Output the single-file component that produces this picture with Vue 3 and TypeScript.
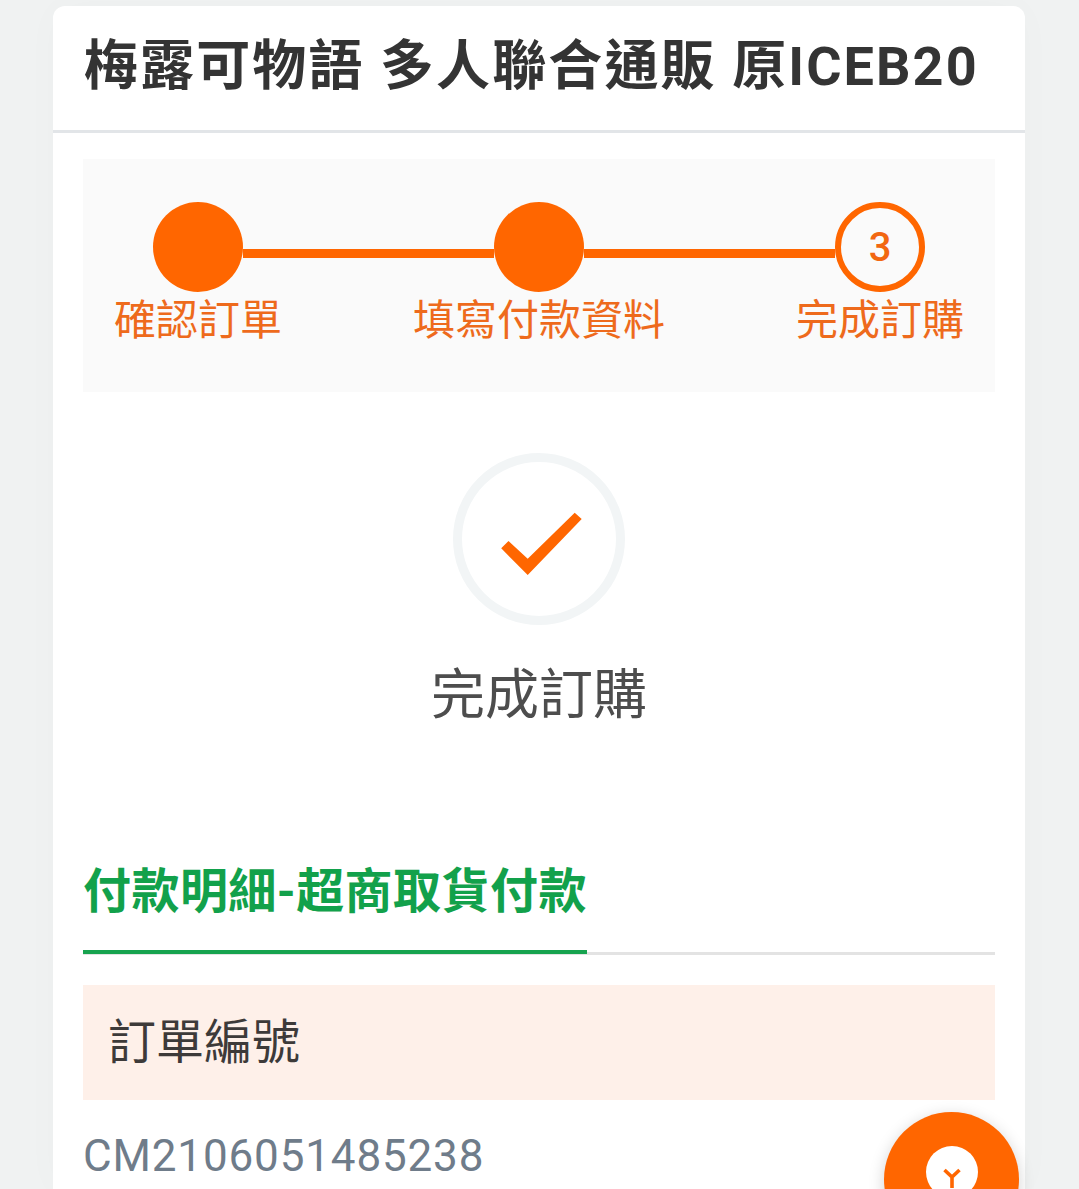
<script setup lang="ts">
const steps = [
  { label: "確認訂單", done: true },
  { label: "填寫付款資料", done: true },
  { label: "完成訂購", done: false },
];
</script>

<template>
  <div class="page">
    <section class="card">
      <header class="card-header">
        <h1>梅露可物語 多人聯合通販 原ICEB20</h1>
      </header>

      <div class="card-body">
        <div class="steps">
          <div class="steps-track">
            <template v-for="(step, i) in steps" :key="step.label">
              <div v-if="i > 0" class="steps-line"></div>
              <div class="steps-dot" :class="{ current: !step.done }">
                <span v-if="!step.done">{{ i + 1 }}</span>
              </div>
            </template>
          </div>
          <div class="steps-labels">
            <div v-for="step in steps" :key="step.label" class="steps-label">
              <span>{{ step.label }}</span>
            </div>
          </div>
        </div>

        <div class="result">
          <div class="result-ring">
            <svg width="172" height="172" viewBox="0 0 172 172">
              <polygon
                points="55.5,88 48.2,95.3 74.7,122 128.7,66 121.7,59.7 74.7,105.7"
                fill="#ff6600"
              />
            </svg>
          </div>
          <p class="result-text">完成訂購</p>
        </div>

        <div class="section-title">
          <h2>付款明細-超商取貨付款</h2>
        </div>

        <div class="field-label">訂單編號</div>
        <div class="field-value">CM2106051485238</div>
      </div>
    </section>

    <button class="fab" type="button" aria-label="選單">
      <svg width="52" height="52" viewBox="0 0 52 52">
        <circle cx="26" cy="26" r="26" fill="#fff" />
        <path
          d="M18.5 24 L26 31 L33.5 24 M26 31 V42"
          fill="none"
          stroke="#ff6600"
          stroke-width="3.6"
        />
      </svg>
    </button>
  </div>
</template>

<style>
html,
body {
  margin: 0;
  background: #f0f2f2;
}
</style>

<style scoped>
.page {
  position: relative;
  height: 1189px;
  overflow: hidden;
  padding-top: 6px;
  box-sizing: border-box;
  background: #f0f2f2;
  font-family: Roboto, "Noto Sans CJK TC", sans-serif;
}

.card {
  width: 972px;
  margin-left: 53px;
  background: #fff;
  border-radius: 12px 12px 0 0;
  box-shadow: 0 0 40px rgba(0, 0, 0, 0.02);
}

.card-header {
  height: 124px;
  border-bottom: 3px solid #e2e5e8;
  padding-left: 31px;
}

.card-header h1 {
  margin: 0;
  padding-top: 22px;
  font-size: 54px;
  line-height: 78px;
  font-weight: 700;
  letter-spacing: 2.1px;
  color: #343434;
  white-space: nowrap;
}

.card-body {
  padding: 26px 30px 0;
}

.steps {
  background: #fafafa;
  padding: 43px 0 42px;
}

.steps-track {
  display: flex;
  padding: 0 70px;
}

.steps-dot {
  flex: none;
  width: 90px;
  height: 90px;
  box-sizing: border-box;
  border-radius: 50%;
  background: #ff6600;
}

.steps-dot.current {
  display: flex;
  align-items: center;
  justify-content: center;
  border: 6px solid #ff6600;
  background: #fafafa;
  color: #f26711;
  font-size: 40px;
  font-weight: 500;
}

.steps-line {
  flex: 1;
  height: 9px;
  margin-top: 47px;
  background: #ff6600;
}

.steps-labels {
  display: flex;
  justify-content: space-between;
}

.steps-label {
  width: 230px;
  display: flex;
  justify-content: center;
  font-size: 42px;
  line-height: 58px;
  color: #ee6a1c;
  white-space: nowrap;
}

.result {
  display: flex;
  flex-direction: column;
  align-items: center;
  padding-top: 61px;
}

.result-ring {
  width: 172px;
  height: 172px;
  box-sizing: border-box;
  border: 9px solid #f2f5f6;
  border-radius: 50%;
}

.result-ring svg {
  display: block;
  margin: -9px;
}

.result-text {
  margin: 32px 0 0;
  font-size: 54px;
  line-height: 78px;
  color: #4d4d4d;
}

.section-title {
  margin-top: 121px;
  border-bottom: 3px solid #e3e3e3;
  display: flex;
}

.section-title h2 {
  margin: 0 0 -2px;
  padding: 0 0 22px;
  border-bottom: 4px solid #17a34f;
  font-size: 48px;
  line-height: 72px;
  font-weight: 700;
  letter-spacing: 0.45px;
  color: #12a14b;
  white-space: nowrap;
}

.field-label {
  margin-top: 30px;
  height: 115px;
  padding-left: 25px;
  background: #fef0e9;
  font-size: 48px;
  line-height: 116px;
  color: #3d3a39;
}

.field-value {
  margin-top: 21px;
  font-size: 44px;
  line-height: 70px;
  letter-spacing: 0.85px;
  color: #6f7c8a;
}

.fab {
  position: absolute;
  left: 884px;
  top: 1112px;
  width: 135px;
  height: 135px;
  padding: 34px 0 0;
  border: none;
  border-radius: 50%;
  background: #ff6600;
  box-shadow: 0 4px 16px rgba(0, 0, 0, 0.18);
  display: flex;
  justify-content: center;
  align-items: flex-start;
}

.fab svg {
  display: block;
}
</style>
